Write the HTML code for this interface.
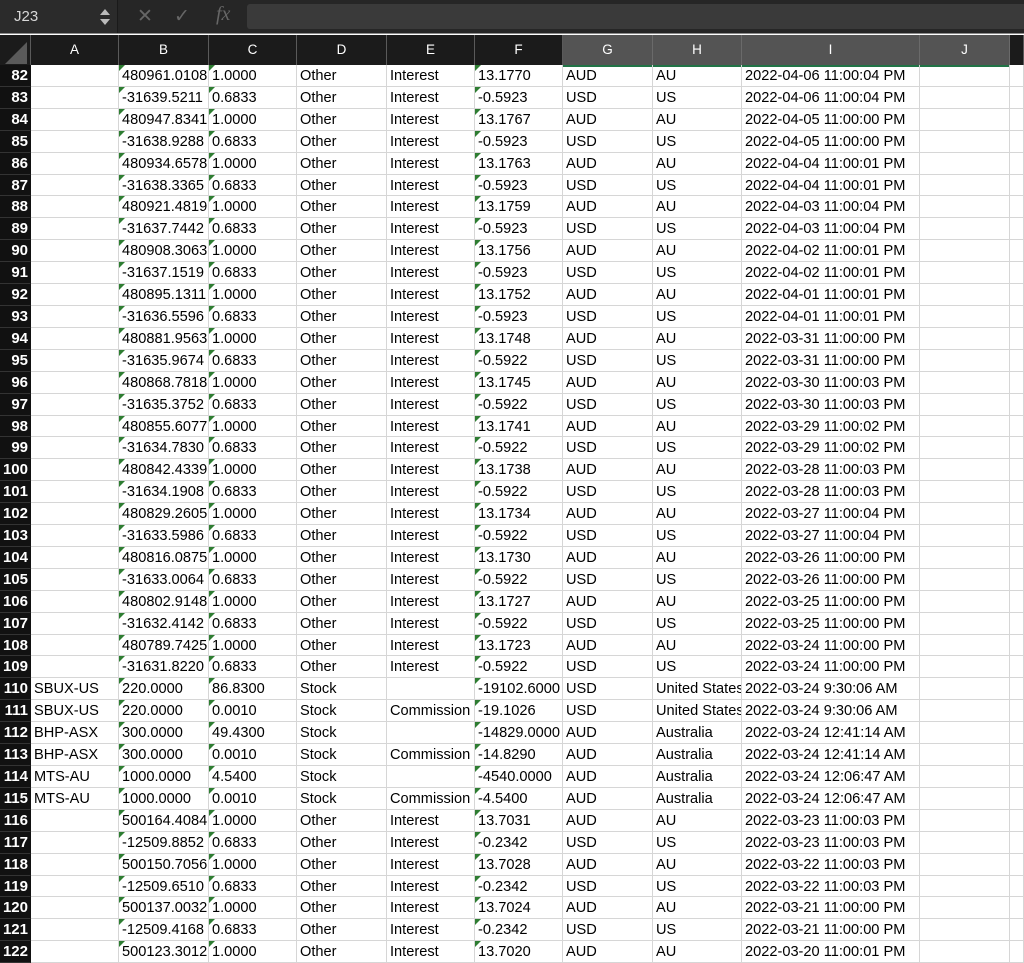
<!DOCTYPE html>
<html><head><meta charset="utf-8"><style>
*{margin:0;padding:0;box-sizing:border-box}
body{width:1024px;height:960px;overflow:hidden;background:#fff;font-family:"Liberation Sans",sans-serif;position:relative}
#tb{position:absolute;left:0;top:0;width:1024px;height:34px;background:#262626;border-bottom:1px solid #8a8a8a}
#nb{position:absolute;left:0;top:0;width:118px;height:33px;background:#2b2b2b;border-right:1px solid #1a1a1a;color:#d8d8d8;font-size:15px;padding:8px 0 0 14px}
.ar{position:absolute;left:100px;width:0;height:0;border-left:5px solid transparent;border-right:5px solid transparent}
#fx{position:absolute;left:247px;top:4px;width:777px;height:25px;background:#3a3a3a;border-radius:3px 0 0 3px}
.ic{position:absolute;top:5px;color:#666;font-size:19px}
#hd{position:absolute;left:0;top:35px;width:1024px;height:30px;background:#1b1b1b;display:grid;grid-template-columns:31px 88px 90px 88px 90px 88px 88px 90px 89px 178px 90px 14px}
#hd div{color:#fff;font-size:13.5px;text-align:center;line-height:30px;border-right:1px solid #5a5a5a}
#hd .s{background:#545454;border-bottom:2px solid #217346;border-right:1px solid #6a6a6a}
#gr{position:absolute;left:0;top:65px;width:1024px;display:grid;grid-template-columns:31px 88px 90px 88px 90px 88px 88px 90px 89px 178px 90px 14px;grid-auto-rows:21.92px}
#gr div{border-right:1px solid #d6d6d6;border-bottom:1px solid #d6d6d6;font-size:14.6px;line-height:22px;padding-left:3px;white-space:nowrap;overflow:hidden;position:relative;color:#000}
#gr div.n{background:#111;color:#fff;font-weight:bold;font-size:15px;text-align:right;padding:0 2px 0 0;border-right:1px solid #111;border-bottom:1px solid #333}
#gr div.g::before{content:"";position:absolute;left:0;top:0;border-top:6px solid #2e7d32;border-right:6px solid transparent}
</style></head><body>
<div id="tb">
<div id="nb">J23</div>
<div class="ar" style="top:9px;border-bottom:6px solid #bbb"></div>
<div class="ar" style="top:19px;border-top:6px solid #bbb"></div>
<div class="ic" style="left:137px">✕</div>
<div class="ic" style="left:174px">✓</div>
<div class="ic" style="left:216px;font-family:'Liberation Serif',serif;font-style:italic;font-size:20px;top:3px">fx</div>
<div id="fx"></div>
</div>
<div id="hd"><div style="background:#1b1b1b;position:relative"><span style="position:absolute;right:3px;bottom:3px;width:0;height:0;border-left:22px solid transparent;border-bottom:22px solid #5a5a5a"></span></div><div>A</div><div>B</div><div>C</div><div>D</div><div>E</div><div>F</div><div class="s">G</div><div class="s">H</div><div class="s">I</div><div class="s">J</div><div></div></div>
<div id="gr">
<div class="n">82</div><div></div><div class="g">480961.0108</div><div class="g">1.0000</div><div>Other</div><div>Interest</div><div class="g">13.1770</div><div>AUD</div><div>AU</div><div>2022-04-06 11:00:04 PM</div><div></div><div></div>
<div class="n">83</div><div></div><div class="g">-31639.5211</div><div class="g">0.6833</div><div>Other</div><div>Interest</div><div class="g">-0.5923</div><div>USD</div><div>US</div><div>2022-04-06 11:00:04 PM</div><div></div><div></div>
<div class="n">84</div><div></div><div class="g">480947.8341</div><div class="g">1.0000</div><div>Other</div><div>Interest</div><div class="g">13.1767</div><div>AUD</div><div>AU</div><div>2022-04-05 11:00:00 PM</div><div></div><div></div>
<div class="n">85</div><div></div><div class="g">-31638.9288</div><div class="g">0.6833</div><div>Other</div><div>Interest</div><div class="g">-0.5923</div><div>USD</div><div>US</div><div>2022-04-05 11:00:00 PM</div><div></div><div></div>
<div class="n">86</div><div></div><div class="g">480934.6578</div><div class="g">1.0000</div><div>Other</div><div>Interest</div><div class="g">13.1763</div><div>AUD</div><div>AU</div><div>2022-04-04 11:00:01 PM</div><div></div><div></div>
<div class="n">87</div><div></div><div class="g">-31638.3365</div><div class="g">0.6833</div><div>Other</div><div>Interest</div><div class="g">-0.5923</div><div>USD</div><div>US</div><div>2022-04-04 11:00:01 PM</div><div></div><div></div>
<div class="n">88</div><div></div><div class="g">480921.4819</div><div class="g">1.0000</div><div>Other</div><div>Interest</div><div class="g">13.1759</div><div>AUD</div><div>AU</div><div>2022-04-03 11:00:04 PM</div><div></div><div></div>
<div class="n">89</div><div></div><div class="g">-31637.7442</div><div class="g">0.6833</div><div>Other</div><div>Interest</div><div class="g">-0.5923</div><div>USD</div><div>US</div><div>2022-04-03 11:00:04 PM</div><div></div><div></div>
<div class="n">90</div><div></div><div class="g">480908.3063</div><div class="g">1.0000</div><div>Other</div><div>Interest</div><div class="g">13.1756</div><div>AUD</div><div>AU</div><div>2022-04-02 11:00:01 PM</div><div></div><div></div>
<div class="n">91</div><div></div><div class="g">-31637.1519</div><div class="g">0.6833</div><div>Other</div><div>Interest</div><div class="g">-0.5923</div><div>USD</div><div>US</div><div>2022-04-02 11:00:01 PM</div><div></div><div></div>
<div class="n">92</div><div></div><div class="g">480895.1311</div><div class="g">1.0000</div><div>Other</div><div>Interest</div><div class="g">13.1752</div><div>AUD</div><div>AU</div><div>2022-04-01 11:00:01 PM</div><div></div><div></div>
<div class="n">93</div><div></div><div class="g">-31636.5596</div><div class="g">0.6833</div><div>Other</div><div>Interest</div><div class="g">-0.5923</div><div>USD</div><div>US</div><div>2022-04-01 11:00:01 PM</div><div></div><div></div>
<div class="n">94</div><div></div><div class="g">480881.9563</div><div class="g">1.0000</div><div>Other</div><div>Interest</div><div class="g">13.1748</div><div>AUD</div><div>AU</div><div>2022-03-31 11:00:00 PM</div><div></div><div></div>
<div class="n">95</div><div></div><div class="g">-31635.9674</div><div class="g">0.6833</div><div>Other</div><div>Interest</div><div class="g">-0.5922</div><div>USD</div><div>US</div><div>2022-03-31 11:00:00 PM</div><div></div><div></div>
<div class="n">96</div><div></div><div class="g">480868.7818</div><div class="g">1.0000</div><div>Other</div><div>Interest</div><div class="g">13.1745</div><div>AUD</div><div>AU</div><div>2022-03-30 11:00:03 PM</div><div></div><div></div>
<div class="n">97</div><div></div><div class="g">-31635.3752</div><div class="g">0.6833</div><div>Other</div><div>Interest</div><div class="g">-0.5922</div><div>USD</div><div>US</div><div>2022-03-30 11:00:03 PM</div><div></div><div></div>
<div class="n">98</div><div></div><div class="g">480855.6077</div><div class="g">1.0000</div><div>Other</div><div>Interest</div><div class="g">13.1741</div><div>AUD</div><div>AU</div><div>2022-03-29 11:00:02 PM</div><div></div><div></div>
<div class="n">99</div><div></div><div class="g">-31634.7830</div><div class="g">0.6833</div><div>Other</div><div>Interest</div><div class="g">-0.5922</div><div>USD</div><div>US</div><div>2022-03-29 11:00:02 PM</div><div></div><div></div>
<div class="n">100</div><div></div><div class="g">480842.4339</div><div class="g">1.0000</div><div>Other</div><div>Interest</div><div class="g">13.1738</div><div>AUD</div><div>AU</div><div>2022-03-28 11:00:03 PM</div><div></div><div></div>
<div class="n">101</div><div></div><div class="g">-31634.1908</div><div class="g">0.6833</div><div>Other</div><div>Interest</div><div class="g">-0.5922</div><div>USD</div><div>US</div><div>2022-03-28 11:00:03 PM</div><div></div><div></div>
<div class="n">102</div><div></div><div class="g">480829.2605</div><div class="g">1.0000</div><div>Other</div><div>Interest</div><div class="g">13.1734</div><div>AUD</div><div>AU</div><div>2022-03-27 11:00:04 PM</div><div></div><div></div>
<div class="n">103</div><div></div><div class="g">-31633.5986</div><div class="g">0.6833</div><div>Other</div><div>Interest</div><div class="g">-0.5922</div><div>USD</div><div>US</div><div>2022-03-27 11:00:04 PM</div><div></div><div></div>
<div class="n">104</div><div></div><div class="g">480816.0875</div><div class="g">1.0000</div><div>Other</div><div>Interest</div><div class="g">13.1730</div><div>AUD</div><div>AU</div><div>2022-03-26 11:00:00 PM</div><div></div><div></div>
<div class="n">105</div><div></div><div class="g">-31633.0064</div><div class="g">0.6833</div><div>Other</div><div>Interest</div><div class="g">-0.5922</div><div>USD</div><div>US</div><div>2022-03-26 11:00:00 PM</div><div></div><div></div>
<div class="n">106</div><div></div><div class="g">480802.9148</div><div class="g">1.0000</div><div>Other</div><div>Interest</div><div class="g">13.1727</div><div>AUD</div><div>AU</div><div>2022-03-25 11:00:00 PM</div><div></div><div></div>
<div class="n">107</div><div></div><div class="g">-31632.4142</div><div class="g">0.6833</div><div>Other</div><div>Interest</div><div class="g">-0.5922</div><div>USD</div><div>US</div><div>2022-03-25 11:00:00 PM</div><div></div><div></div>
<div class="n">108</div><div></div><div class="g">480789.7425</div><div class="g">1.0000</div><div>Other</div><div>Interest</div><div class="g">13.1723</div><div>AUD</div><div>AU</div><div>2022-03-24 11:00:00 PM</div><div></div><div></div>
<div class="n">109</div><div></div><div class="g">-31631.8220</div><div class="g">0.6833</div><div>Other</div><div>Interest</div><div class="g">-0.5922</div><div>USD</div><div>US</div><div>2022-03-24 11:00:00 PM</div><div></div><div></div>
<div class="n">110</div><div>SBUX-US</div><div class="g">220.0000</div><div class="g">86.8300</div><div>Stock</div><div></div><div class="g">-19102.6000</div><div>USD</div><div>United States</div><div>2022-03-24 9:30:06 AM</div><div></div><div></div>
<div class="n">111</div><div>SBUX-US</div><div class="g">220.0000</div><div class="g">0.0010</div><div>Stock</div><div>Commission</div><div class="g">-19.1026</div><div>USD</div><div>United States</div><div>2022-03-24 9:30:06 AM</div><div></div><div></div>
<div class="n">112</div><div>BHP-ASX</div><div class="g">300.0000</div><div class="g">49.4300</div><div>Stock</div><div></div><div class="g">-14829.0000</div><div>AUD</div><div>Australia</div><div>2022-03-24 12:41:14 AM</div><div></div><div></div>
<div class="n">113</div><div>BHP-ASX</div><div class="g">300.0000</div><div class="g">0.0010</div><div>Stock</div><div>Commission</div><div class="g">-14.8290</div><div>AUD</div><div>Australia</div><div>2022-03-24 12:41:14 AM</div><div></div><div></div>
<div class="n">114</div><div>MTS-AU</div><div class="g">1000.0000</div><div class="g">4.5400</div><div>Stock</div><div></div><div class="g">-4540.0000</div><div>AUD</div><div>Australia</div><div>2022-03-24 12:06:47 AM</div><div></div><div></div>
<div class="n">115</div><div>MTS-AU</div><div class="g">1000.0000</div><div class="g">0.0010</div><div>Stock</div><div>Commission</div><div class="g">-4.5400</div><div>AUD</div><div>Australia</div><div>2022-03-24 12:06:47 AM</div><div></div><div></div>
<div class="n">116</div><div></div><div class="g">500164.4084</div><div class="g">1.0000</div><div>Other</div><div>Interest</div><div class="g">13.7031</div><div>AUD</div><div>AU</div><div>2022-03-23 11:00:03 PM</div><div></div><div></div>
<div class="n">117</div><div></div><div class="g">-12509.8852</div><div class="g">0.6833</div><div>Other</div><div>Interest</div><div class="g">-0.2342</div><div>USD</div><div>US</div><div>2022-03-23 11:00:03 PM</div><div></div><div></div>
<div class="n">118</div><div></div><div class="g">500150.7056</div><div class="g">1.0000</div><div>Other</div><div>Interest</div><div class="g">13.7028</div><div>AUD</div><div>AU</div><div>2022-03-22 11:00:03 PM</div><div></div><div></div>
<div class="n">119</div><div></div><div class="g">-12509.6510</div><div class="g">0.6833</div><div>Other</div><div>Interest</div><div class="g">-0.2342</div><div>USD</div><div>US</div><div>2022-03-22 11:00:03 PM</div><div></div><div></div>
<div class="n">120</div><div></div><div class="g">500137.0032</div><div class="g">1.0000</div><div>Other</div><div>Interest</div><div class="g">13.7024</div><div>AUD</div><div>AU</div><div>2022-03-21 11:00:00 PM</div><div></div><div></div>
<div class="n">121</div><div></div><div class="g">-12509.4168</div><div class="g">0.6833</div><div>Other</div><div>Interest</div><div class="g">-0.2342</div><div>USD</div><div>US</div><div>2022-03-21 11:00:00 PM</div><div></div><div></div>
<div class="n">122</div><div></div><div class="g">500123.3012</div><div class="g">1.0000</div><div>Other</div><div>Interest</div><div class="g">13.7020</div><div>AUD</div><div>AU</div><div>2022-03-20 11:00:01 PM</div><div></div><div></div>
</div>
</body></html>
